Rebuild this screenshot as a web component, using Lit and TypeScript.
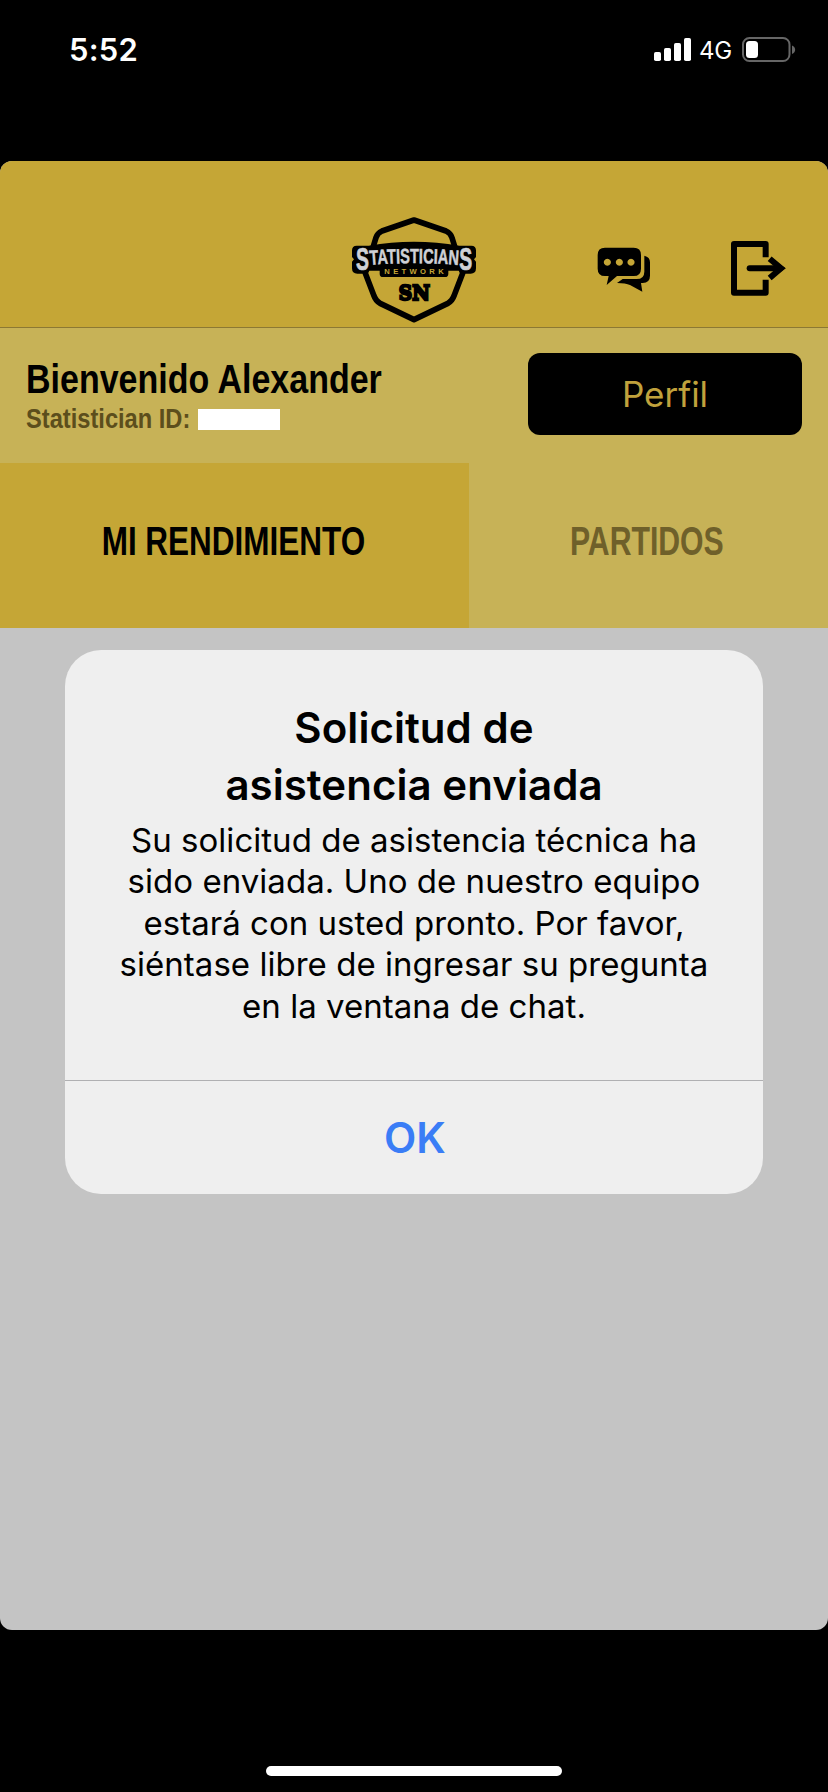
import { LitElement, html, css } from "lit";
import { customElement, property } from "lit/decorators.js";

@customElement("status-bar")
class StatusBar extends LitElement {
  static styles = css`
    :host { display: block; height: 161px; color: #fff; }
    .row { display: flex; justify-content: space-between; height: 100px; padding: 0 32px 0 69px; }
    .time { font-weight: 600; font-size: 31px; line-height: 36px; padding-top: 32px; letter-spacing: 0.2px; }
    .right { display: flex; align-items: flex-start; padding-top: 35px; }
    .net { font-size: 24px; line-height: 30px; width: 32px; margin: 1px 11px 0 7px; letter-spacing: -0.3px; }
  `;
  render() {
    return html`<div class="row">
      <div class="time">5:52</div>
      <div class="right">
        <svg width="38" height="30" viewBox="0 0 38 30" fill="#fff">
          <rect x="0" y="17" width="7" height="9" rx="1.8" />
          <rect x="10" y="13" width="7" height="13" rx="1.8" />
          <rect x="20" y="8" width="7" height="18" rx="1.8" />
          <rect x="30" y="3" width="7" height="23" rx="1.8" />
        </svg>
        <span class="net">4G</span>
        <svg width="54" height="30" viewBox="0 0 54 30">
          <rect x="1" y="3" width="46.500" height="23" rx="6.500" fill="none" stroke="#666" stroke-width="2" />
          <path d="M50 10.500v8.500c4.200-1.600 4.200-6.900 0-8.500z" fill="#666" />
          <rect x="4" y="6" width="12" height="17" rx="3.500" fill="#fff" />
        </svg>
      </div>
    </div>`;
  }
}

@customElement("network-logo")
class NetworkLogo extends LitElement {
  static styles = css`
    :host { display: block; }
    svg { display: block; }
    .name { font: bold 62px "Liberation Sans", sans-serif; fill: #cfd1d6; stroke: #cfd1d6; stroke-width: 1.5; }
    .sub { font: bold 23px "Liberation Sans", sans-serif; fill: #c5a636; }
    .mono { font: bold 62px "DejaVu Serif", serif; fill: #000; stroke: #000; stroke-width: 7; }
  `;
  render() {
    return html`<svg width="148" height="120" viewBox="0 0 444 360">
      <path d="M222 45 L318 78 Q332 84 336 98 L352 150 L368 205 L343 270 Q337 288 322 296 L222 344 L122 296 Q107 288 101 270 L76 205 L92 150 L108 98 Q112 84 126 78 Z"
        fill="none" stroke="#000" stroke-width="17" stroke-linejoin="round" />
      <path d="M50 122 H86 Q222 98 358 122 H394 Q408 122 408 136 V156 L402 163 L408 170 V190 Q408 206 392 206 H364 L356 197 H325 V206 Q325 216 315 216 H129 Q119 216 119 206 V197 H88 L80 206 H52 Q36 206 36 190 V170 L42 163 L36 156 V136 Q36 122 50 122 Z" fill="#000" />
      <path id="arc" d="M90 180 Q222 169 358 180" fill="none" />
      <text class="name" x="0" y="0" transform="translate(48 195) scale(.94 1.500)">S</text>
      <text class="name"><textPath href="#arc" textLength="266" lengthAdjust="spacingAndGlyphs">TATISTICIAN</textPath></text>
      <text class="name" x="0" y="0" transform="translate(358 195) scale(.94 1.500)">S</text>
      <text class="sub" x="133" y="206" textLength="178">NETWORK</text>
      <g transform="translate(176 286)">
        <text class="mono" x="0" y="0" textLength="40" lengthAdjust="spacingAndGlyphs">S</text>
        <text class="mono" x="41" y="0" textLength="53" lengthAdjust="spacingAndGlyphs">N</text>
      </g>
    </svg>`;
  }
}

@customElement("app-header")
class AppHeader extends LitElement {
  static styles = css`
    :host { display: grid; grid-template-columns: 1fr 148px 1fr; height: 167px; box-sizing: border-box; background: #c5a636; border-bottom: 1px solid #8c7833; }
    .logo { grid-column: 2; padding-top: 44px; }
    .actions { display: flex; justify-content: space-between; padding: 76px 40px 0 108px; }
    svg { display: block; }
  `;
  render() {
    return html`
      <network-logo class="logo"></network-logo>
      <div class="actions">
        <svg width="56" height="60" viewBox="48 36 168 180">
          <path fill-rule="evenodd" d="M75 68 H161 Q183 68 183 90 V131 Q183 153 161 153 H111 L80 180 L86 153 H75 Q53 153 53 131 V90 Q53 68 75 68 Z
            M82 101 a10.500 10.500 0 1 0 .1 0 Z M118 101 a10.500 10.500 0 1 0 .1 0 Z M153 101 a10.500 10.500 0 1 0 .1 0 Z" />
          <path d="M193 92 Q210 96 210 112 V152 Q210 173 188 174 H183 L187 200 L150 180 Q137 174 111 174 L128 162 H170 Q193 162 193 140 Z" />
        </svg>
        <svg width="58" height="60" viewBox="450 36 174 180" fill="none" stroke="#000" stroke-width="18">
          <path d="M557 97 V57 H462 V203 H557 V164" stroke-linejoin="round" />
          <path d="M509 130 H600" stroke-linecap="round" />
          <path d="M569 101 L603 130 L569 159" />
          <path d="M597 116 L617 130 L597 144 Z" fill="#000" stroke="none" />
        </svg>
      </div>`;
  }
}

@customElement("welcome-bar")
class WelcomeBar extends LitElement {
  static styles = css`
    :host { display: flex; justify-content: space-between; height: 135px; box-sizing: border-box; padding: 25px 26px 0; background: #c7b257; }
    .who { padding-top: 3px; font-family: "Liberation Sans", Arial, sans-serif; font-weight: 700; white-space: nowrap; }
    .hello { font-size: 40px; line-height: 46px; width: 360px; color: #000; transform: scaleX(.85); transform-origin: 0 0; }
    .id { display: flex; }
    .label { width: 172px; font-size: 28px; line-height: 34px; color: #5c4e1c; transform: scaleX(.845); transform-origin: 0 0; }
    .mask { width: 82px; height: 21px; margin-top: 7px; background: #fff; }
    .profile { display: block; width: 274px; height: 82px; border: 0; border-radius: 12px; background: #000; color: #c0a23c; font: 400 35px/82px Inter, sans-serif; padding: 0; }
  `;
  @property() name = "Alexander";
  render() {
    return html`<div class="who">
        <div class="hello">Bienvenido ${this.name}</div>
        <div class="id"><span class="label">Statistician ID:</span><span class="mask"></span></div>
      </div>
      <button class="profile">Perfil</button>`;
  }
}

@customElement("tab-strip")
class TabStrip extends LitElement {
  static styles = css`
    :host { display: grid; grid-template-columns: 469px 1fr; height: 165px; background: #c7b257; font: 700 40px/46px "Liberation Sans", Arial, sans-serif; white-space: nowrap; }
    .tab { display: flex; align-items: center; justify-content: center; padding: 0 3px 9px 0; color: #6f602a; }
    .active { background: #c5a636; color: #000; }
    .wide { transform: scaleX(.787); }
    .tight { transform: scaleX(.755); }
  `;
  render() {
    return html`<div class="tab active"><span class="wide">MI RENDIMIENTO</span></div>
      <div class="tab"><span class="tight">PARTIDOS</span></div>`;
  }
}

@customElement("alert-dialog")
class AlertDialog extends LitElement {
  static styles = css`
    :host { display: flex; flex-direction: column; width: 698px; height: 544px; border-radius: 36px; background: #efefef; color: #000; text-align: center; overflow: hidden; }
    .content { height: 430px; box-sizing: border-box; padding-top: 49px; white-space: nowrap; }
    .title { font-weight: 600; font-size: 42px; line-height: 57px; letter-spacing: 0.05px; }
    .text { margin-top: 7px; font-size: 33px; line-height: 41.4px; letter-spacing: 0.03px; }
    .ok { height: 114px; border: 0; border-top: 1px solid #b0b0b2; padding: 0 0 0 2px; background: none; color: #3a7df6; font: 600 42px Inter, sans-serif; }
  `;
  render() {
    return html`<div class="content">
        <div class="title">Solicitud de<br />asistencia enviada</div>
        <div class="text">Su solicitud de asistencia técnica ha<br />sido enviada. Uno de nuestro equipo<br />estará con usted pronto. Por favor,<br />siéntase libre de ingresar su pregunta<br />en la ventana de chat.</div>
      </div>
      <button class="ok">OK</button>`;
  }
}

@customElement("app-root")
class AppRoot extends LitElement {
  static styles = css`
    :host { display: block; width: 828px; height: 1792px; background: #000; font-family: Inter, sans-serif; overflow: hidden; }
    .sheet { height: 1469px; border-radius: 12px; overflow: hidden; background: #c4c4c4; }
    .body { display: flex; justify-content: center; padding-top: 22px; }
    .home { width: 296px; height: 10px; margin: 136px auto 0; border-radius: 5px; background: #fff; }
  `;
  render() {
    return html`<status-bar></status-bar>
      <div class="sheet">
        <app-header></app-header>
        <welcome-bar></welcome-bar>
        <tab-strip></tab-strip>
        <div class="body"><alert-dialog></alert-dialog></div>
      </div>
      <div class="home"></div>`;
  }
}
